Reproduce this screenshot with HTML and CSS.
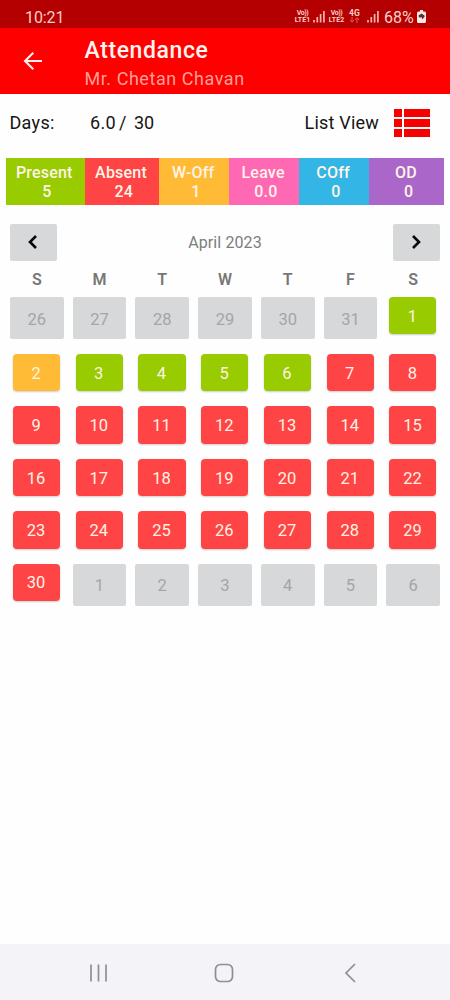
FILE: index.html
```html
<!DOCTYPE html>
<html lang="en">
<head>
<meta charset="utf-8">
<title>Attendance</title>
<link rel="stylesheet" href="styles.css">
</head>
<body>
<div class="screen">
  <div class="status">
    <span class="clock">10:21</span>
    <div class="indicators">
      <span class="lte"><b class="vo">Vo))</b><b>LTE1</b></span>
      <svg class="signal" width="12" height="13" viewBox="0 0 12 13"><path d="M1 10v2.500M4.300 7v5.500M7.600 4v8.500M10.900 1v11.500" stroke="#f7b3a8" stroke-width="1.700"/></svg>
      <span class="lte second"><b class="vo">Vo))</b><b>LTE2</b></span>
      <span class="net"><b>4G</b><svg width="11" height="6" viewBox="0 0 11 6"><path d="M3 0v5M1 3l2 2.200L5 3M8 6V1M6 3l2-2.200L10 3" stroke="#e8564c" fill="none"/></svg></span>
      <svg class="signal last" width="12" height="13" viewBox="0 0 12 13"><path d="M1 10v2.500M4.300 7v5.500M7.600 4v8.500M10.900 1v11.500" stroke="#f7b3a8" stroke-width="1.700"/></svg>
      <span class="percent">68%</span>
      <svg class="battery" width="9" height="13" viewBox="0 0 9 13"><path d="M3 0h3v1.500h1.500Q9 1.500 9 3v8.500Q9 13 7.500 13h-6Q0 13 0 11.500V3Q0 1.500 1.500 1.500H3z" fill="#ffe9e4"/><path d="M1.500 5.500L4.500 3.500 7.500 5.500V7L5 9.500V7.500H2z" fill="#5e3034"/></svg>
    </div>
  </div>
  <header class="appbar">
    <svg class="back" width="20" height="20" viewBox="0 0 20 20"><path d="M19 10H2M10.300 1.700L2 10l8.300 8.300" fill="none" stroke="#fff0ed" stroke-width="2.100"/></svg>
    <div class="titles"><h1>Attendance</h1><p>Mr. Chetan Chavan</p></div>
  </header>
  <div class="summary">
    <span class="days">Days:</span><span class="worked">6.0</span><span class="slash">/</span><span>30</span>
    <span class="listview">List View</span>
    <svg class="listicon" width="36" height="28" viewBox="0 0 36 28"><path d="M0 0h8v8H0zM10 0h26v8H10zM0 10h8v8H0zM10 10h26v8H10zM0 20h8v8H0zM10 20h26v8H10z" fill="#f60000"/></svg>
  </div>
  <div class="legend">
    <div class="present"><span>Present</span><em>5</em></div>
    <div class="absent"><span>Absent</span><em>24</em></div>
    <div class="woff"><span>W-Off</span><em>1</em></div>
    <div class="leave"><span>Leave</span><em>0.0</em></div>
    <div class="coff"><span>COff</span><em>0</em></div>
    <div class="od"><span>OD</span><em>0</em></div>
  </div>
  <div class="month">
    <div class="arrow"><svg width="10" height="14" viewBox="0 0 10 14"><path d="M8 1L2 7l6 6" fill="none" stroke="#080808" stroke-width="2.600"/></svg></div>
    <span>April 2023</span>
    <div class="arrow"><svg width="10" height="14" viewBox="0 0 10 14"><path d="M2 1l6 6-6 6" fill="none" stroke="#080808" stroke-width="2.600"/></svg></div>
  </div>
  <div class="weekdays"><b>S</b><b>M</b><b>T</b><b>W</b><b>T</b><b>F</b><b>S</b></div>
  <div class="days-grid">
    <div class="out">26</div><div class="out">27</div><div class="out">28</div><div class="out">29</div><div class="out">30</div><div class="out">31</div><div class="day present">1</div>
    <div class="day woff">2</div><div class="day present">3</div><div class="day present">4</div><div class="day present">5</div><div class="day present">6</div><div class="day absent">7</div><div class="day absent">8</div>
    <div class="day absent">9</div><div class="day absent">10</div><div class="day absent">11</div><div class="day absent">12</div><div class="day absent">13</div><div class="day absent">14</div><div class="day absent">15</div>
    <div class="day absent">16</div><div class="day absent">17</div><div class="day absent">18</div><div class="day absent">19</div><div class="day absent">20</div><div class="day absent">21</div><div class="day absent">22</div>
    <div class="day absent">23</div><div class="day absent">24</div><div class="day absent">25</div><div class="day absent">26</div><div class="day absent">27</div><div class="day absent">28</div><div class="day absent">29</div>
    <div class="day absent">30</div><div class="out">1</div><div class="out">2</div><div class="out">3</div><div class="out">4</div><div class="out">5</div><div class="out">6</div>
  </div>
  <nav class="navbar">
    <svg width="20" height="20" viewBox="0 0 20 20"><path d="M2 1.500v17M9.500 1.500v17M17 1.500v17" stroke="#8f8e92" stroke-width="1.700"/></svg>
    <svg width="20" height="20" viewBox="0 0 20 20"><rect x="1.500" y="1.500" width="17" height="17" rx="5" fill="none" stroke="#8f8e92" stroke-width="1.700"/></svg>
    <svg width="20" height="20" viewBox="0 0 20 20"><path d="M15 1L6 10l9 9" fill="none" stroke="#8f8e92" stroke-width="1.700"/></svg>
  </nav>
</div>
</body>
</html>
```
FILE: styles.css
```css
* { box-sizing: border-box; }
body { margin: 0; font-family: Roboto, "Liberation Sans", sans-serif; }
svg { display: block; flex: none; }
.screen { width: 450px; height: 1000px; display: flex; flex-direction: column; background: #fefefe; overflow: hidden; }
.status { height: 28px; flex: none; background: #b40000; display: flex; justify-content: space-between; padding: 6px 24px 0 25px; color: #fbcfc8; }
.clock { font-size: 16px; line-height: 23px; letter-spacing: -0.1px; }
.indicators { display: flex; align-items: flex-start; }
.lte { display: flex; flex-direction: column; width: 17px; padding-top: 4px; font-size: 7px; line-height: 7px; text-align: center; }
.lte b { display: block; }
.lte .vo { letter-spacing: -0.5px; }
.signal { margin: 4px 3px 0 2px; }
.net { width: 12px; margin-left: 4px; padding-top: 3px; font-size: 8.5px; line-height: 8px; }
.net b { display: block; }
.signal.last { margin: 4px 5px 0 6px; }
.percent { font-size: 16px; line-height: 23px; width: 31px; }
.battery { margin: 4px 0 0 2px; }
.appbar { height: 66px; flex: none; background: #fe0000; display: flex; align-items: flex-start; padding: 9px 23px 0; }
.back { margin-top: 14px; }
.titles { margin-left: 41.5px; }
h1 { margin: 0; font-size: 23px; line-height: 28px; font-weight: 500; letter-spacing: 0.6px; color: #fff3f0; }
.titles p { margin: 0; font-size: 18px; line-height: 27px; letter-spacing: 0.55px; color: #ff9f96; }
.summary { height: 64px; flex: none; display: flex; align-items: center; padding: 0 20px 6px 9.5px; font-size: 18px; color: #151515; }
.summary span { padding-bottom: 2px; }
.days { width: 80.5px; letter-spacing: 0.3px; }
.worked { width: 29px; letter-spacing: 0.3px; }
.slash { width: 15px; }
.listview { margin-left: auto; letter-spacing: 0.2px; }
.listicon { margin-left: 15px; }
.legend { height: 47px; flex: none; margin: 0 5.500px; display: grid; grid-template-columns: 79px 74.500px 70px 69.700px 70.300px 75.500px; }
.legend div { display: flex; flex-direction: column; align-items: center; padding-top: 5px; font-size: 16px; line-height: 19px; font-weight: 500; letter-spacing: 0.2px; color: #fff4e8; }
.legend span { margin-right: 1.5px; }
.legend em { font-style: normal; margin-left: 4px; }
.present { background: #98cb00; }
.absent { background: #fe4444; }
.woff { background: #ffbb35; }
.leave { background: #ff69b4; }
.coff { background: #33b5e5; }
.od { background: #aa66c9; }
.month { flex: none; margin: 19px 10px 0; display: flex; align-items: center; justify-content: space-between; font-size: 16px; letter-spacing: 0.1px; color: #7d7d7d; }
.arrow { width: 47px; height: 37px; border-radius: 2px; background: #d7d8d9; display: flex; align-items: center; justify-content: center; padding: 0 1px 1px 0; }
.weekdays, .days-grid { flex: none; margin: 0 10px; display: grid; grid-template-columns: repeat(7, 1fr); column-gap: 9.200px; text-align: center; }
.weekdays { height: 36px; font-size: 16px; line-height: 37px; color: #777; }
.weekdays b { font-weight: 600; }
.days-grid { grid-template-rows: 42px repeat(4, 37.300px) 42px; row-gap: 15.100px; font-size: 16.500px; letter-spacing: 0; }
.out { display: flex; align-items: center; justify-content: center; padding-top: 2px; border-radius: 2px; background: #d6d8d9; color: #a3a6a7; }
.day { height: 37.300px; margin: 0 3.500px 0 3px; display: flex; align-items: center; justify-content: center; padding: 1px 1px 0 0; border-radius: 4px; color: #fff2e4; box-shadow: 0 1px 2px rgba(0, 0, 0, 0.2); }
.navbar { height: 56px; flex: none; margin-top: auto; background: #f4f3f7; display: flex; align-items: center; justify-content: space-between; padding: 1px 90px 0 88.5px; }
```
